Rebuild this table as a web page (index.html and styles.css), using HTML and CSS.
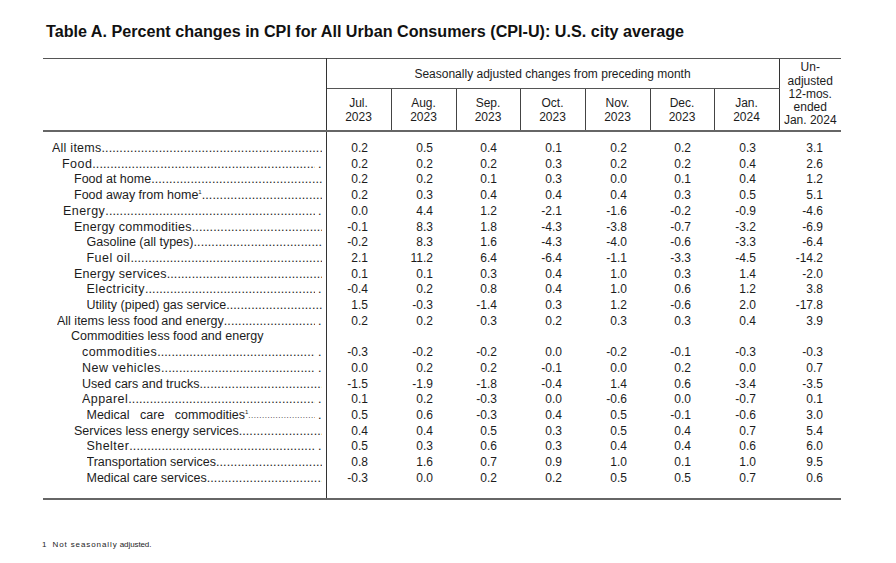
FILE: index.html
```html
<!DOCTYPE html>
<html>
<head>
<meta charset="utf-8">
<link rel="stylesheet" href="styles.css">
</head>
<body>
<div class="page">
<h1 class="title">Table A. Percent changes in CPI for All Urban Consumers (CPI-U): U.S. city average</h1>
<table class="cpi">
<colgroup>
<col class="c-label"><col class="c-m"><col class="c-m"><col class="c-n"><col class="c-m"><col class="c-m"><col class="c-n"><col class="c-m"><col class="c-last">
</colgroup>
<thead>
<tr class="h1">
<th class="hl" rowspan="2"></th>
<th class="hs" colspan="7">Seasonally adjusted changes from preceding month</th>
<th class="hu" rowspan="2">Un-<br>adjusted<br>12-mos.<br>ended<br>Jan. 2024</th>
</tr>
<tr class="h2">
<th>Jul.<br>2023</th><th>Aug.<br>2023</th><th>Sep.<br>2023</th><th>Oct.<br>2023</th><th>Nov.<br>2023</th><th>Dec.<br>2023</th><th>Jan.<br>2024</th>
</tr>
</thead>
<tbody>
<tr><td class="lb l0"><div class="lbl"><span class="sp3">All items</span><span class="dots"></span></div></td><td>0.2</td><td>0.5</td><td>0.4</td><td>0.1</td><td>0.2</td><td>0.2</td><td>0.3</td><td class="u">3.1</td></tr>
<tr><td class="lb l1"><div class="lbl"><span class="sp">Food</span><span class="dots"></span><span class="end">.</span></div></td><td>0.2</td><td>0.2</td><td>0.2</td><td>0.3</td><td>0.2</td><td>0.2</td><td>0.4</td><td class="u">2.6</td></tr>
<tr><td class="lb l3"><div class="lbl"><span>Food at home</span><span class="dots"></span></div></td><td>0.2</td><td>0.2</td><td>0.1</td><td>0.3</td><td>0.0</td><td>0.1</td><td>0.4</td><td class="u">1.2</td></tr>
<tr><td class="lb l3"><div class="lbl"><span>Food away from home<sup>1</sup></span><span class="dots"></span></div></td><td>0.2</td><td>0.3</td><td>0.4</td><td>0.4</td><td>0.4</td><td>0.3</td><td>0.5</td><td class="u">5.1</td></tr>
<tr><td class="lb l1b"><div class="lbl"><span class="sp">Energy</span><span class="dots"></span><span class="end">.</span></div></td><td>0.0</td><td>4.4</td><td>1.2</td><td>-2.1</td><td>-1.6</td><td>-0.2</td><td>-0.9</td><td class="u">-4.6</td></tr>
<tr><td class="lb l3"><div class="lbl"><span class="sp3">Energy commodities</span><span class="dots"></span></div></td><td>-0.1</td><td>8.3</td><td>1.8</td><td>-4.3</td><td>-3.8</td><td>-0.7</td><td>-3.2</td><td class="u">-6.9</td></tr>
<tr><td class="lb l5"><div class="lbl"><span>Gasoline (all types)</span><span class="dots"></span></div></td><td>-0.2</td><td>8.3</td><td>1.6</td><td>-4.3</td><td>-4.0</td><td>-0.6</td><td>-3.3</td><td class="u">-6.4</td></tr>
<tr><td class="lb l5"><div class="lbl"><span class="sp">Fuel oil</span><span class="dots"></span></div></td><td>2.1</td><td>11.2</td><td>6.4</td><td>-6.4</td><td>-1.1</td><td>-3.3</td><td>-4.5</td><td class="u">-14.2</td></tr>
<tr><td class="lb l3"><div class="lbl"><span class="sp3">Energy services</span><span class="dots"></span></div></td><td>0.1</td><td>0.1</td><td>0.3</td><td>0.4</td><td>1.0</td><td>0.3</td><td>1.4</td><td class="u">-2.0</td></tr>
<tr><td class="lb l5"><div class="lbl"><span class="sp">Electricity</span><span class="dots"></span><span class="end">.</span></div></td><td>-0.4</td><td>0.2</td><td>0.8</td><td>0.4</td><td>1.0</td><td>0.6</td><td>1.2</td><td class="u">3.8</td></tr>
<tr><td class="lb l5"><div class="lbl"><span>Utility (piped) gas service</span><span class="dots"></span></div></td><td>1.5</td><td>-0.3</td><td>-1.4</td><td>0.3</td><td>1.2</td><td>-0.6</td><td>2.0</td><td class="u">-17.8</td></tr>
<tr><td class="lb lx"><div class="lbl"><span>All items less food and energy</span><span class="dots"></span><span class="end">.</span></div></td><td>0.2</td><td>0.2</td><td>0.3</td><td>0.2</td><td>0.3</td><td>0.3</td><td>0.4</td><td class="u">3.9</td></tr>
<tr><td class="lb l2"><div class="lbl"><span>Commodities less food and energy</span></div></td><td></td><td></td><td></td><td></td><td></td><td></td><td></td><td class="u"></td></tr>
<tr><td class="lb l4"><div class="lbl"><span class="sp">commodities</span><span class="dots"></span><span class="end">.</span></div></td><td>-0.3</td><td>-0.2</td><td>-0.2</td><td>0.0</td><td>-0.2</td><td>-0.1</td><td>-0.3</td><td class="u">-0.3</td></tr>
<tr><td class="lb l4"><div class="lbl"><span class="sp">New vehicles</span><span class="dots"></span><span class="end">.</span></div></td><td>0.0</td><td>0.2</td><td>0.2</td><td>-0.1</td><td>0.0</td><td>0.2</td><td>0.0</td><td class="u">0.7</td></tr>
<tr><td class="lb l4"><div class="lbl"><span>Used cars and trucks</span><span class="dots"></span></div></td><td>-1.5</td><td>-1.9</td><td>-1.8</td><td>-0.4</td><td>1.4</td><td>0.6</td><td>-3.4</td><td class="u">-3.5</td></tr>
<tr><td class="lb l4"><div class="lbl"><span class="sp">Apparel</span><span class="dots"></span><span class="end">.</span></div></td><td>0.1</td><td>0.2</td><td>-0.3</td><td>0.0</td><td>-0.6</td><td>0.0</td><td>-0.7</td><td class="u">0.1</td></tr>
<tr><td class="lb l5"><div class="lbl med"><span class="wide">Medical care commodities<sup>1</sup></span><span class="dots small"></span><span class="end">.</span></div></td><td>0.5</td><td>0.6</td><td>-0.3</td><td>0.4</td><td>0.5</td><td>-0.1</td><td>-0.6</td><td class="u">3.0</td></tr>
<tr><td class="lb l3"><div class="lbl"><span>Services less energy services</span><span class="dots"></span></div></td><td>0.4</td><td>0.4</td><td>0.5</td><td>0.3</td><td>0.5</td><td>0.4</td><td>0.7</td><td class="u">5.4</td></tr>
<tr><td class="lb l5"><div class="lbl"><span class="sp">Shelter</span><span class="dots"></span><span class="end">.</span></div></td><td>0.5</td><td>0.3</td><td>0.6</td><td>0.3</td><td>0.4</td><td>0.4</td><td>0.6</td><td class="u">6.0</td></tr>
<tr><td class="lb l5"><div class="lbl"><span>Transportation services</span><span class="dots"></span></div></td><td>0.8</td><td>1.6</td><td>0.7</td><td>0.9</td><td>1.0</td><td>0.1</td><td>1.0</td><td class="u">9.5</td></tr>
<tr><td class="lb l5"><div class="lbl"><span>Medical care services</span><span class="dots"></span></div></td><td>-0.3</td><td>0.0</td><td>0.2</td><td>0.2</td><td>0.5</td><td>0.5</td><td>0.7</td><td class="u">0.6</td></tr>
</tbody>
</table>
<p class="foot"><span class="fn">1</span><span class="fsp">Not seasonally</span> <span class="fnar">adjusted.</span></p>
</div>
</body>
</html>
```
FILE: styles.css
```css
body {
  margin: 0;
  background: #fff;
  color: #1c1c1c;
  font-family: "Liberation Sans", Arial, sans-serif;
}
.page {
  padding: 21px 0 0 43px;
}
.title {
  margin: 0 0 0 3px;
  font-size: 16.15px;
  line-height: 20px;
  font-weight: bold;
  color: #111;
}
.cpi {
  margin-top: 17px;
  border-collapse: collapse;
  table-layout: fixed;
  width: 798px;
}
.c-label { width: 283px; }
.c-m { width: 65px; }
.c-n { width: 64px; }
.c-last { width: 62px; }

.cpi th {
  font-weight: normal;
  font-size: 12px;
  padding: 0;
  text-align: center;
  vertical-align: middle;
}
.h1 th {
  height: 29px;
  border-top: 1px solid #555;
}
.hs {
  border-bottom: 1px solid #555;
}
.hl {
  border-right: 1px solid #333;
  border-bottom: 2px solid #666;
}
.hu {
  border-left: 1px solid #333;
  border-bottom: 2px solid #666;
  line-height: 13.3px;
}
.h2 th {
  height: 41px;
  line-height: 14px;
  border-left: 1px solid #444;
  border-bottom: 2px solid #666;
}

.cpi td {
  padding: 0 23px 0 0;
  font-size: 12px;
  line-height: 15.7px;
  text-align: right;
  vertical-align: top;
  white-space: nowrap;
}
.cpi td.u { padding-right: 18px; }
.cpi tbody tr:first-child td { padding-top: 9px; }
.cpi tbody tr:last-child td {
  padding-bottom: 12px;
  border-bottom: 2px solid #666;
}
.cpi td.lb {
  text-align: left;
  font-size: 12.5px;
  padding-right: 4px;
  border-right: 1px solid #333;
}
.l0 { padding-left: 9px !important; }
.lx { padding-left: 14px !important; }
.l1 { padding-left: 19px !important; }
.l1b { padding-left: 20px !important; }
.l2 { padding-left: 28px !important; }
.l3 { padding-left: 31px !important; }
.l4 { padding-left: 39px !important; }
.l5 { padding-left: 43.5px !important; }

.lbl {
  display: flex;
  overflow: hidden;
  white-space: nowrap;
}
.lbl > span:first-child { flex: none; }
.sp { letter-spacing: 0.45px; }
.sp3 { letter-spacing: 0.25px; }
.wide { word-spacing: 7px; }
.dots {
  flex: 1 1 0;
  min-width: 0;
  overflow: hidden;
  letter-spacing: 0.1px;
}
.dots::after {
  content: "..........................................................................................................";
}
.dots.small { font-size: 8px; letter-spacing: 0.5px; }
.end { flex: none; padding-left: 3px; }
sup {
  font-size: 6px;
  line-height: 0;
  vertical-align: 5px;
}
.foot {
  margin: 40px 0 0 -1px;
  font-size: 8px;
  line-height: 10px;
}
.fn { margin-right: 6px; }
.fsp { letter-spacing: 0.9px; }
.fnar { letter-spacing: -0.1px; }
```
